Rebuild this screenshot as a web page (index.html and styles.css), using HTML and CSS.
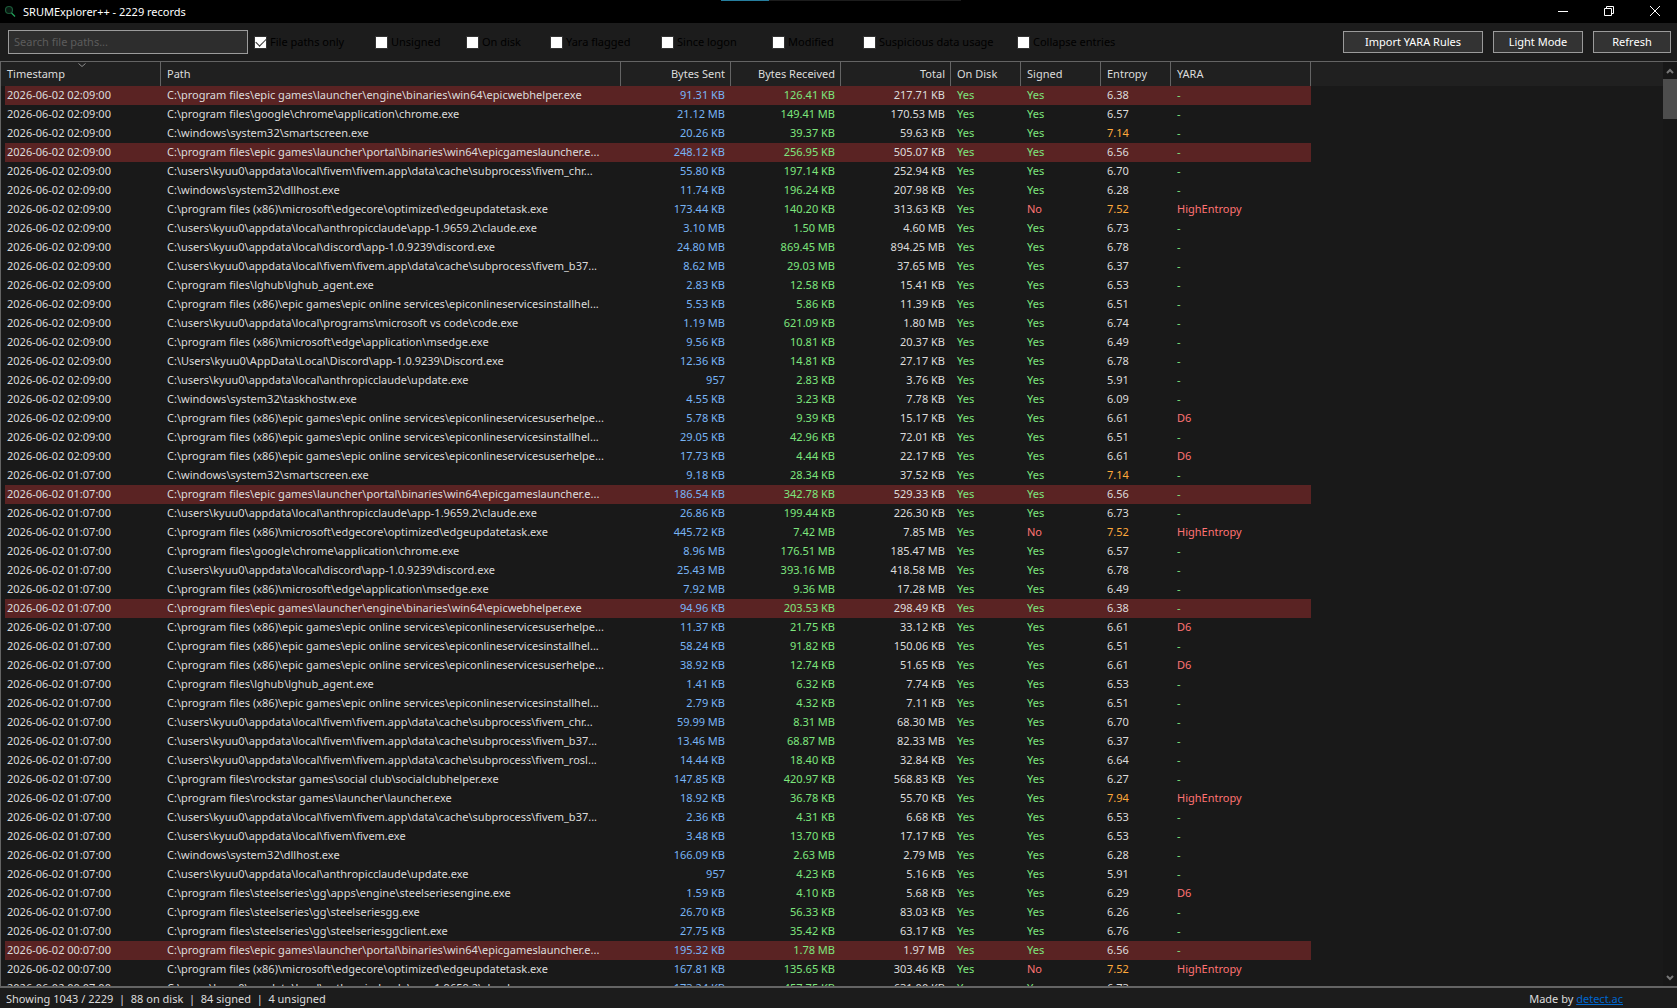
FILE: index.html
```html
<!DOCTYPE html>
<html lang="en">
<head>
    <meta charset="UTF-8">
    <meta name="viewport" content="width=device-width, initial-scale=1.0">
    <title>SRUMExplorer++</title>
    <link rel="stylesheet" href="styles.css">
</head>
<body>
<header class="titlebar">
    <svg class="app-icon" viewBox="0 0 16 16" aria-hidden="true">
        <circle cx="7" cy="6" r="3.500" fill="#0a1a12" stroke="#1b5a39" stroke-width="1.200"/>
        <path d="M9.500 9l3.500 3.500" stroke="#22a45c" stroke-width="1.300" fill="none"/>
    </svg>
    <h1>SRUMExplorer++ - 2229 records</h1>
    <div class="progress"><span class="progress-done"></span></div>
    <div class="window-buttons">
        <button aria-label="Minimize">
            <svg viewBox="0 0 12 12"><path d="M1 6.500h10"/></svg>
        </button>
        <button aria-label="Restore">
            <svg viewBox="0 0 12 12"><path d="M1.500 3.500h7v7h-7zM3.500 3.500v-2h7v7h-2"/></svg>
        </button>
        <button aria-label="Close">
            <svg viewBox="0 0 12 12"><path d="M1 1l10 10M11 1l-10 10"/></svg>
        </button>
    </div>
</header>

<div class="toolbar">
    <input type="text" class="search" placeholder="Search file paths..." aria-label="Search file paths">
    <div class="filters">
        <label class="filter-paths"><input type="checkbox" checked><span>File paths only</span></label>
        <label class="filter-unsigned"><input type="checkbox"><span>Unsigned</span></label>
        <label class="filter-disk"><input type="checkbox"><span>On disk</span></label>
        <label class="filter-yara"><input type="checkbox"><span>Yara flagged</span></label>
        <label class="filter-logon"><input type="checkbox"><span>Since logon</span></label>
        <label class="filter-modified"><input type="checkbox"><span>Modified</span></label>
        <label class="filter-usage"><input type="checkbox"><span>Suspicious data usage</span></label>
        <label class="filter-collapse"><input type="checkbox"><span>Collapse entries</span></label>
    </div>
    <div class="actions">
        <button class="import">Import YARA Rules</button>
        <button class="theme">Light Mode</button>
        <button class="refresh">Refresh</button>
    </div>
</div>

<main class="list">
    <div class="list-view">
        <table>
            <colgroup>
                <col class="col-time">
                <col class="col-path">
                <col class="col-bytes">
                <col class="col-bytes">
                <col class="col-bytes">
                <col class="col-disk">
                <col class="col-signed">
                <col class="col-entropy">
                <col class="col-yara">
                <col>
            </colgroup>
            <thead>
            <tr>
                <th class="sorted">Timestamp
                    <svg class="sort-arrow" viewBox="0 0 8 4" aria-hidden="true"><path d="M0.500 0.500l3.500 3 3.500-3"/></svg>
                </th>
                <th>Path</th>
                <th class="num">Bytes Sent</th>
                <th class="num">Bytes Received</th>
                <th class="num">Total</th>
                <th>On Disk</th>
                <th>Signed</th>
                <th>Entropy</th>
                <th>YARA</th>
                <td class="filler"></td>
            </tr>
            </thead>
            <tbody id="records"></tbody>
        </table>
    </div>
    <div class="scrollbar">
        <button aria-label="Scroll up"><svg viewBox="0 0 8 6"><path d="M1 5l3-3 3 3"/></svg></button>
        <div class="thumb"></div>
        <button aria-label="Scroll down"><svg viewBox="0 0 8 6"><path d="M1 1l3 3 3-3"/></svg></button>
    </div>
</main>

<footer class="statusbar">
    <span>Showing 1043 / 2229 &nbsp;|&nbsp; 88 on disk &nbsp;|&nbsp; 84 signed &nbsp;|&nbsp; 4 unsigned</span>
    <span>Made by <a href="https://detect.ac">detect.ac</a></span>
</footer>

<script src="records.js"></script>
</body>
</html>
```
FILE: styles.css
```css
* {
    box-sizing: border-box;
}

body {
    margin: 0;
    height: 100vh;
    display: flex;
    flex-direction: column;
    overflow: hidden;
    background: #1c1c1c;
    color: #dcdcdc;
    font-family: "Noto Sans", "Open Sans", sans-serif;
    font-size: 11px;
    line-height: 15px;
}

button,
input {
    font: inherit;
}

/* Title bar */
.titlebar {
    position: relative;
    display: flex;
    align-items: center;
    height: 23px;
    flex: none;
    padding-left: 2px;
    background: #000;
}

.app-icon {
    width: 16px;
    height: 16px;
}

h1 {
    margin: 0 0 0 5px;
    color: #fff;
    font-size: 11px;
    font-weight: normal;
}

.progress {
    position: absolute;
    top: 0;
    left: 43%;
    width: 240px;
    height: 1px;
    background: #1c1c1c;
}

.progress-done {
    display: block;
    width: 20%;
    height: 1px;
    background: #267e9e;
}

.window-buttons {
    display: flex;
    margin-left: auto;
}

.window-buttons button {
    width: 46px;
    height: 20px;
    padding: 0 0 2px 2px;
    border: none;
    background: none;
}

.window-buttons svg {
    display: block;
    width: 12px;
    height: 12px;
    margin: 0 auto;
    fill: none;
    stroke: #fff;
}

/* Toolbar */
.toolbar {
    display: flex;
    align-items: center;
    height: 38px;
    flex: none;
    padding: 0 6px 0 8px;
}

.search {
    width: 240px;
    height: 24px;
    padding: 0 5px 2px;
    border: 1px solid #9b9b9b;
    background: #2d2d2d;
    color: #dcdcdc;
}

.search::placeholder {
    color: #5c5c5c;
    opacity: 1;
}

.filters {
    display: flex;
    margin-left: 6px;
    color: #000;
}

.filters label {
    display: flex;
    align-items: center;
    gap: 3px;
    white-space: nowrap;
}

.filters span {
    padding-bottom: 1px;
}

.filters input {
    appearance: none;
    display: grid;
    place-items: center;
    flex: none;
    width: 13px;
    height: 13px;
    margin: 0;
    border: 1px solid #333;
    background: #fff;
}

.filters input:checked::after {
    content: "";
    width: 9px;
    height: 5px;
    margin-bottom: 3px;
    border: solid #333;
    border-width: 0 0 1px 1px;
    rotate: -45deg;
}

.filter-paths { width: 121px; }
.filter-unsigned { width: 91px; }
.filter-disk { width: 84px; }
.filter-yara { width: 111px; }
.filter-logon { width: 111px; }
.filter-modified { width: 91px; }
.filter-usage { width: 154px; }

.actions {
    display: flex;
    gap: 10px;
    margin-left: auto;
}

.actions button {
    height: 22px;
    padding: 0 0 1px;
    border: 1px solid #9b9b9b;
    background: #333;
    color: #fff;
}

.actions .import { width: 140px; }
.actions .theme { width: 90px; }
.actions .refresh { width: 78px; }

/* Record list */
.list {
    display: flex;
    flex: 1;
    min-height: 0;
    overflow: hidden;
    border: 1px solid #646464;
    border-width: 1px 0 2px 1px;
    background: #191919;
}

.list-view {
    flex: 1;
    overflow: hidden;
}

table {
    width: 100%;
    table-layout: fixed;
    border-collapse: separate;
    border-spacing: 0;
}

.col-time { width: 160px; }
.col-path { width: 460px; }
.col-bytes { width: 110px; }
.col-disk { width: 70px; }
.col-signed { width: 80px; }
.col-entropy { width: 70px; }
.col-yara { width: 140px; }

th,
td {
    padding: 0 6px 2px;
    text-align: left;
    font-weight: normal;
    white-space: nowrap;
}

th {
    height: 24px;
    padding-right: 5px;
    border-right: 1px solid #646464;
}

thead {
    background: #202020;
}

.sorted {
    position: relative;
}

.sort-arrow {
    position: absolute;
    top: 1px;
    left: 50%;
    width: 8px;
    height: 4px;
    margin-left: -3px;
    fill: none;
    stroke: #8c8c8c;
}

tbody td {
    height: 19px;
    line-height: 17px;
}

.num {
    text-align: right;
}

.sent { color: #78b4f5; }
.received,
.good { color: #7de67d; }
.bad { color: #ff7373; }
.warn { color: #ffaa3c; }

.flagged td:not(.filler) {
    background: #5a2323;
}

/* the row highlight starts a little inside the first column */
.flagged td:first-child {
    background: linear-gradient(#5a2323, #5a2323) 4px 0 no-repeat;
}

.scrollbar {
    display: flex;
    flex-direction: column;
    width: 14px;
    background: #171717;
}

.scrollbar button {
    height: 17px;
    padding: 0;
    border: none;
    background: none;
}

.scrollbar button:last-child {
    margin-top: auto;
}

.scrollbar svg {
    display: block;
    width: 8px;
    height: 6px;
    margin: 0 auto;
    fill: none;
    stroke: #777;
    stroke-width: 2;
}

.thumb {
    height: 40px;
    background: #4d4d4d;
}

/* Status bar */
.statusbar {
    display: flex;
    justify-content: space-between;
    align-items: center;
    height: 20px;
    flex: none;
    padding: 1px 54px 0 6px;
}

.statusbar a {
    color: #0066cc;
}
```
FILE: records.js
```js
// timestamp, path, bytes sent, bytes received, total, signed, entropy, yara, flagged
const T1 = '2026-06-02 02:09:00';
const T2 = '2026-06-02 01:07:00';
const T3 = '2026-06-02 00:07:00';

const records = [
    [T1, 'C:\\program files\\epic games\\launcher\\engine\\binaries\\win64\\epicwebhelper.exe', '91.31 KB', '126.41 KB', '217.71 KB', 'Yes', '6.38', '-', true],
    [T1, 'C:\\program files\\google\\chrome\\application\\chrome.exe', '21.12 MB', '149.41 MB', '170.53 MB', 'Yes', '6.57', '-'],
    [T1, 'C:\\windows\\system32\\smartscreen.exe', '20.26 KB', '39.37 KB', '59.63 KB', 'Yes', '7.14', '-'],
    [T1, 'C:\\program files\\epic games\\launcher\\portal\\binaries\\win64\\epicgameslauncher.e...', '248.12 KB', '256.95 KB', '505.07 KB', 'Yes', '6.56', '-', true],
    [T1, 'C:\\users\\kyuu0\\appdata\\local\\fivem\\fivem.app\\data\\cache\\subprocess\\fivem_chr...', '55.80 KB', '197.14 KB', '252.94 KB', 'Yes', '6.70', '-'],
    [T1, 'C:\\windows\\system32\\dllhost.exe', '11.74 KB', '196.24 KB', '207.98 KB', 'Yes', '6.28', '-'],
    [T1, 'C:\\program files (x86)\\microsoft\\edgecore\\optimized\\edgeupdatetask.exe', '173.44 KB', '140.20 KB', '313.63 KB', 'No', '7.52', 'HighEntropy'],
    [T1, 'C:\\users\\kyuu0\\appdata\\local\\anthropicclaude\\app-1.9659.2\\claude.exe', '3.10 MB', '1.50 MB', '4.60 MB', 'Yes', '6.73', '-'],
    [T1, 'C:\\users\\kyuu0\\appdata\\local\\discord\\app-1.0.9239\\discord.exe', '24.80 MB', '869.45 MB', '894.25 MB', 'Yes', '6.78', '-'],
    [T1, 'C:\\users\\kyuu0\\appdata\\local\\fivem\\fivem.app\\data\\cache\\subprocess\\fivem_b37...', '8.62 MB', '29.03 MB', '37.65 MB', 'Yes', '6.37', '-'],
    [T1, 'C:\\program files\\lghub\\lghub_agent.exe', '2.83 KB', '12.58 KB', '15.41 KB', 'Yes', '6.53', '-'],
    [T1, 'C:\\program files (x86)\\epic games\\epic online services\\epiconlineservicesinstallhel...', '5.53 KB', '5.86 KB', '11.39 KB', 'Yes', '6.51', '-'],
    [T1, 'C:\\users\\kyuu0\\appdata\\local\\programs\\microsoft vs code\\code.exe', '1.19 MB', '621.09 KB', '1.80 MB', 'Yes', '6.74', '-'],
    [T1, 'C:\\program files (x86)\\microsoft\\edge\\application\\msedge.exe', '9.56 KB', '10.81 KB', '20.37 KB', 'Yes', '6.49', '-'],
    [T1, 'C:\\Users\\kyuu0\\AppData\\Local\\Discord\\app-1.0.9239\\Discord.exe', '12.36 KB', '14.81 KB', '27.17 KB', 'Yes', '6.78', '-'],
    [T1, 'C:\\users\\kyuu0\\appdata\\local\\anthropicclaude\\update.exe', '957', '2.83 KB', '3.76 KB', 'Yes', '5.91', '-'],
    [T1, 'C:\\windows\\system32\\taskhostw.exe', '4.55 KB', '3.23 KB', '7.78 KB', 'Yes', '6.09', '-'],
    [T1, 'C:\\program files (x86)\\epic games\\epic online services\\epiconlineservicesuserhelpe...', '5.78 KB', '9.39 KB', '15.17 KB', 'Yes', '6.61', 'D6'],
    [T1, 'C:\\program files (x86)\\epic games\\epic online services\\epiconlineservicesinstallhel...', '29.05 KB', '42.96 KB', '72.01 KB', 'Yes', '6.51', '-'],
    [T1, 'C:\\program files (x86)\\epic games\\epic online services\\epiconlineservicesuserhelpe...', '17.73 KB', '4.44 KB', '22.17 KB', 'Yes', '6.61', 'D6'],
    [T2, 'C:\\windows\\system32\\smartscreen.exe', '9.18 KB', '28.34 KB', '37.52 KB', 'Yes', '7.14', '-'],
    [T2, 'C:\\program files\\epic games\\launcher\\portal\\binaries\\win64\\epicgameslauncher.e...', '186.54 KB', '342.78 KB', '529.33 KB', 'Yes', '6.56', '-', true],
    [T2, 'C:\\users\\kyuu0\\appdata\\local\\anthropicclaude\\app-1.9659.2\\claude.exe', '26.86 KB', '199.44 KB', '226.30 KB', 'Yes', '6.73', '-'],
    [T2, 'C:\\program files (x86)\\microsoft\\edgecore\\optimized\\edgeupdatetask.exe', '445.72 KB', '7.42 MB', '7.85 MB', 'No', '7.52', 'HighEntropy'],
    [T2, 'C:\\program files\\google\\chrome\\application\\chrome.exe', '8.96 MB', '176.51 MB', '185.47 MB', 'Yes', '6.57', '-'],
    [T2, 'C:\\users\\kyuu0\\appdata\\local\\discord\\app-1.0.9239\\discord.exe', '25.43 MB', '393.16 MB', '418.58 MB', 'Yes', '6.78', '-'],
    [T2, 'C:\\program files (x86)\\microsoft\\edge\\application\\msedge.exe', '7.92 MB', '9.36 MB', '17.28 MB', 'Yes', '6.49', '-'],
    [T2, 'C:\\program files\\epic games\\launcher\\engine\\binaries\\win64\\epicwebhelper.exe', '94.96 KB', '203.53 KB', '298.49 KB', 'Yes', '6.38', '-', true],
    [T2, 'C:\\program files (x86)\\epic games\\epic online services\\epiconlineservicesuserhelpe...', '11.37 KB', '21.75 KB', '33.12 KB', 'Yes', '6.61', 'D6'],
    [T2, 'C:\\program files (x86)\\epic games\\epic online services\\epiconlineservicesinstallhel...', '58.24 KB', '91.82 KB', '150.06 KB', 'Yes', '6.51', '-'],
    [T2, 'C:\\program files (x86)\\epic games\\epic online services\\epiconlineservicesuserhelpe...', '38.92 KB', '12.74 KB', '51.65 KB', 'Yes', '6.61', 'D6'],
    [T2, 'C:\\program files\\lghub\\lghub_agent.exe', '1.41 KB', '6.32 KB', '7.74 KB', 'Yes', '6.53', '-'],
    [T2, 'C:\\program files (x86)\\epic games\\epic online services\\epiconlineservicesinstallhel...', '2.79 KB', '4.32 KB', '7.11 KB', 'Yes', '6.51', '-'],
    [T2, 'C:\\users\\kyuu0\\appdata\\local\\fivem\\fivem.app\\data\\cache\\subprocess\\fivem_chr...', '59.99 MB', '8.31 MB', '68.30 MB', 'Yes', '6.70', '-'],
    [T2, 'C:\\users\\kyuu0\\appdata\\local\\fivem\\fivem.app\\data\\cache\\subprocess\\fivem_b37...', '13.46 MB', '68.87 MB', '82.33 MB', 'Yes', '6.37', '-'],
    [T2, 'C:\\users\\kyuu0\\appdata\\local\\fivem\\fivem.app\\data\\cache\\subprocess\\fivem_rosl...', '14.44 KB', '18.40 KB', '32.84 KB', 'Yes', '6.64', '-'],
    [T2, 'C:\\program files\\rockstar games\\social club\\socialclubhelper.exe', '147.85 KB', '420.97 KB', '568.83 KB', 'Yes', '6.27', '-'],
    [T2, 'C:\\program files\\rockstar games\\launcher\\launcher.exe', '18.92 KB', '36.78 KB', '55.70 KB', 'Yes', '7.94', 'HighEntropy'],
    [T2, 'C:\\users\\kyuu0\\appdata\\local\\fivem\\fivem.app\\data\\cache\\subprocess\\fivem_b37...', '2.36 KB', '4.31 KB', '6.68 KB', 'Yes', '6.53', '-'],
    [T2, 'C:\\users\\kyuu0\\appdata\\local\\fivem\\fivem.exe', '3.48 KB', '13.70 KB', '17.17 KB', 'Yes', '6.53', '-'],
    [T2, 'C:\\windows\\system32\\dllhost.exe', '166.09 KB', '2.63 MB', '2.79 MB', 'Yes', '6.28', '-'],
    [T2, 'C:\\users\\kyuu0\\appdata\\local\\anthropicclaude\\update.exe', '957', '4.23 KB', '5.16 KB', 'Yes', '5.91', '-'],
    [T2, 'C:\\program files\\steelseries\\gg\\apps\\engine\\steelseriesengine.exe', '1.59 KB', '4.10 KB', '5.68 KB', 'Yes', '6.29', 'D6'],
    [T2, 'C:\\program files\\steelseries\\gg\\steelseriesgg.exe', '26.70 KB', '56.33 KB', '83.03 KB', 'Yes', '6.26', '-'],
    [T2, 'C:\\program files\\steelseries\\gg\\steelseriesggclient.exe', '27.75 KB', '35.42 KB', '63.17 KB', 'Yes', '6.76', '-'],
    [T3, 'C:\\program files\\epic games\\launcher\\portal\\binaries\\win64\\epicgameslauncher.e...', '195.32 KB', '1.78 MB', '1.97 MB', 'Yes', '6.56', '-', true],
    [T3, 'C:\\program files (x86)\\microsoft\\edgecore\\optimized\\edgeupdatetask.exe', '167.81 KB', '135.65 KB', '303.46 KB', 'No', '7.52', 'HighEntropy'],
    [T3, 'C:\\users\\kyuu0\\appdata\\local\\anthropicclaude\\app-1.9659.2\\claude.exe', '173.24 KB', '457.75 KB', '631.00 KB', 'Yes', '6.73', '-']
];

document.getElementById('records').innerHTML = records.map(r => {
    const [time, path, sent, received, total, signed, entropy, yara, flagged] = r;

    return `
        <tr class="${flagged ? 'flagged' : ''}">
            <td>${time}</td>
            <td>${path}</td>
            <td class="num sent">${sent}</td>
            <td class="num received">${received}</td>
            <td class="num">${total}</td>
            <td class="good">Yes</td>
            <td class="${signed === 'Yes' ? 'good' : 'bad'}">${signed}</td>
            <td class="${parseFloat(entropy) > 7 ? 'warn' : ''}">${entropy}</td>
            <td class="${yara === '-' ? 'good' : 'bad'}">${yara}</td>
            <td class="filler"></td>
        </tr>`;
}).join('');
```
